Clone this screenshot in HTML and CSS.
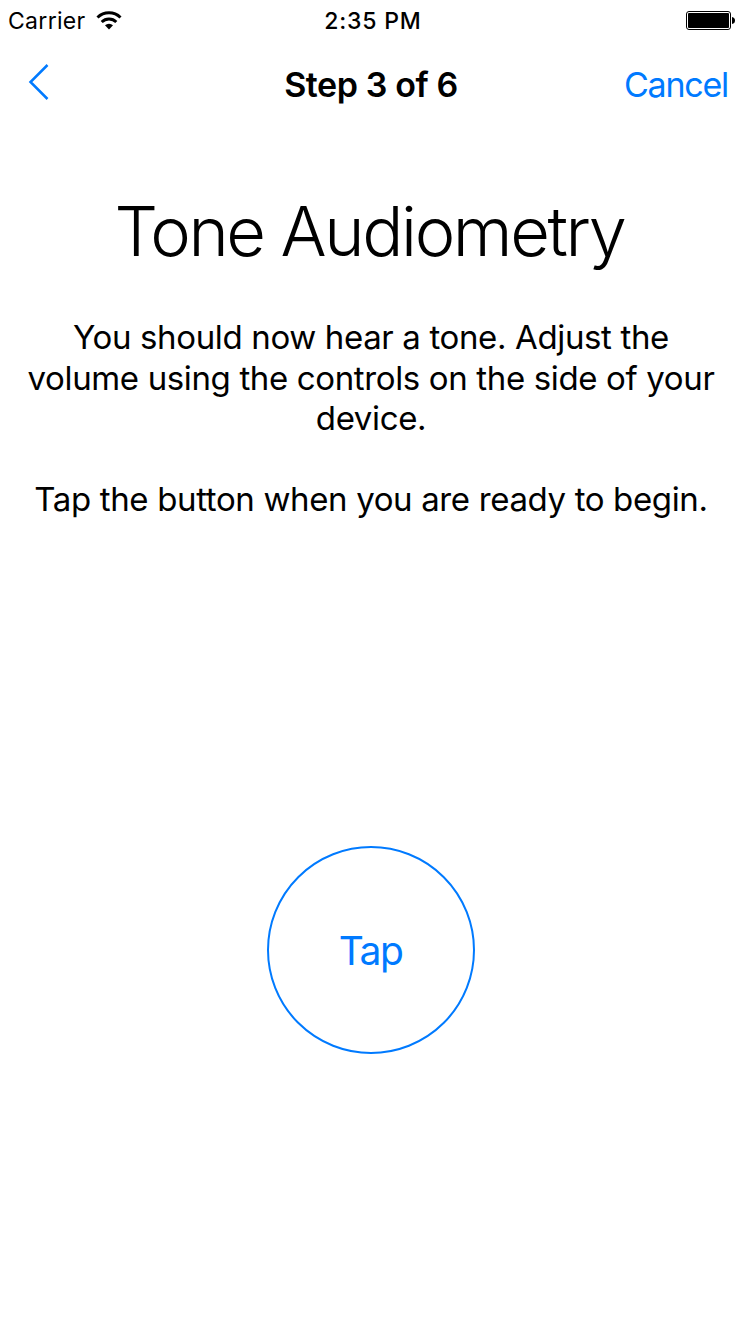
FILE: index.html
```html
<!DOCTYPE html>
<html lang="en">
<head>
<meta charset="utf-8">
<title>Tone Audiometry</title>
<link rel="stylesheet" href="styles.css">
</head>
<body>
<div class="screen">
  <header class="status">
    <div class="status-left"><span class="carrier">Carrier</span>
      <svg class="wifi" width="26" height="20" viewBox="0 0 26 20"><path fill="none" stroke="#000" stroke-width="3" d="M1.500 6.500A16.500 16.500 0 0 1 24.500 6.500M5.700 11A10.500 10.500 0 0 1 20.300 11"/><path d="M9 14.200A6 6 0 0 1 17 14.200L13 18.400Z"/></svg>
    </div>
    <span class="time">2:35 PM</span>
    <svg class="battery" width="49" height="19" viewBox="0 0 49 19"><rect x=".5" y=".5" width="44" height="18" rx="2.500" fill="none" stroke="#000"/><rect x="2" y="2" width="41" height="15" rx="1"/><path d="M46 6Q49 6.500 49 9.500T46 13Z"/></svg>
  </header>
  <nav class="nav">
    <svg class="back" width="22" height="38" viewBox="0 0 22 38"><path d="M19.500 2L2.500 19L19.500 36" fill="none" stroke="#007aff" stroke-width="2.500"/></svg>
    <span class="step">Step 3 of 6</span>
    <span class="cancel">Cancel</span>
  </nav>
  <main class="content">
    <h1 class="title">Tone Audiometry</h1>
    <div class="copy">
      <p class="line">You should now hear a tone. Adjust the</p>
      <p class="line">volume using the controls on the side of your</p>
      <p class="line">device.</p>
      <p class="line prompt">Tap the button when you are ready to begin.</p>
    </div>
    <button class="tap">Tap</button>
  </main>
</div>
</body>
</html>
```
FILE: styles.css
```css
body { margin: 0; background: #fff; color: #000; font-family: Inter, sans-serif; }
.screen { width: 742px; height: 1332px; overflow: hidden; }
.status, .nav { display: grid; grid-template-columns: minmax(0, 1fr) auto minmax(0, 1fr); align-items: center; }
.status { height: 41px; padding: 0 7px 0 8px; }
.status-left { display: flex; align-items: center; gap: 10px; }
.carrier { font-size: 23px; letter-spacing: .3px; }
.time { font-size: 23px; font-weight: 500; letter-spacing: .8px; margin-left: 3px; }
.battery { justify-self: end; }
.nav { height: 87px; padding: 0 14px; }
.back { margin: -5px 0 0 14px; }
.step { font-size: 34px; font-weight: 600; letter-spacing: -.4px; }
.cancel { font-size: 34px; color: #007aff; justify-self: end; letter-spacing: -1.250px; }
.content { display: flex; flex-direction: column; align-items: center; }
.title { margin: 59px 0 0; font-size: 68.500px; line-height: 90px; font-weight: 320; letter-spacing: -2.400px; text-indent: -3px; white-space: nowrap; }
.copy { margin-top: 40px; font-size: 33px; line-height: 40.500px; letter-spacing: -.36px; text-align: center; }
.line { margin: 0; white-space: nowrap; }
.prompt { margin-top: 40.500px; }
.tap { margin-top: 326px; width: 208px; height: 208px; border: 2px solid #007aff; border-radius: 50%; background: none; color: #007aff; font: 400 39px Inter, sans-serif; letter-spacing: -1.500px; text-indent: -1px; padding: 1px 0 0; }
```
